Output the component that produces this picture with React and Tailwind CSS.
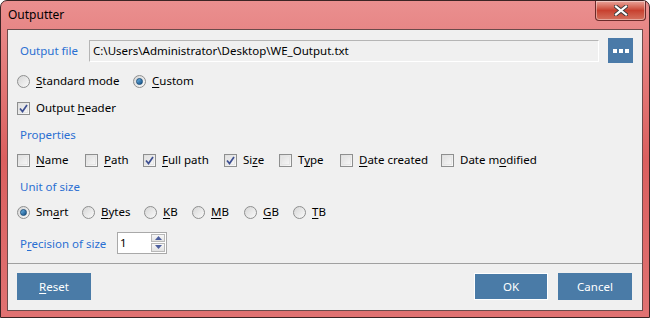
import { useState } from "react";

const font = { fontFamily: '"Noto Sans", "Open Sans", sans-serif' };

function Label({ text, u }) {
    // underline the access key letter
    const i = u ?? -1;
    if (i < 0) return <span>{text}</span>;
    return (
        <span>
            {text.slice(0, i)}
            <span className="underline underline-offset-2">{text[i]}</span>
            {text.slice(i + 1)}
        </span>
    );
}

function Check({ checked }) {
    return (
        <span className="relative flex h-[13px] w-[13px] shrink-0 items-center justify-center border border-[#8e8f8f] bg-gradient-to-br from-[#dcdcdc] to-[#fbfbfb]">
            <span className="absolute inset-[1px] border border-[#e6e6e6]" />
            {checked && (
                <svg width="9" height="9" viewBox="0 0 9 9" className="relative">
                    <path d="M1 4.5 L3.5 7.5 L8 1" fill="none" stroke="#3d4f91" strokeWidth="1.7" />
                </svg>
            )}
        </span>
    );
}

function Radio({ checked }) {
    return (
        <span className="flex h-[13px] w-[13px] shrink-0 items-center justify-center rounded-full border border-[#8e8f8f] bg-gradient-to-br from-[#d6d6d6] to-[#fafafa]">
            {checked && (
                <span className="h-[7px] w-[7px] rounded-full border border-[#1c4e7a] bg-gradient-to-br from-[#6fb7e8] to-[#0f4f86]" />
            )}
        </span>
    );
}

function Option({ type, label, u, checked, w }) {
    return (
        <div className={`flex items-center gap-[6px] ${w}`}>
            {type === "check" ? <Check checked={checked} /> : <Radio checked={checked} />}
            <Label text={label} u={u} />
        </div>
    );
}

const properties = [
    { label: "Name", u: 0, checked: false, w: "w-[68px]" },
    { label: "Path", u: 0, checked: false, w: "w-[58px]" },
    { label: "Full path", u: 0, checked: true, w: "w-[81px]" },
    { label: "Size", u: 2, checked: true, w: "w-[55px]" },
    { label: "Type", u: 1, checked: false, w: "w-[61px]" },
    { label: "Date created", u: 0, checked: false, w: "w-[101px]" },
    { label: "Date modified", u: 6, checked: false, w: "w-auto" },
];

const units = [
    { label: "Smart", u: 2, w: "w-[65px]" },
    { label: "Bytes", u: 0, w: "w-[62px]" },
    { label: "KB", u: 0, w: "w-[48px]" },
    { label: "MB", u: 0, w: "w-[52px]" },
    { label: "GB", u: 0, w: "w-[49px]" },
    { label: "TB", u: 0, w: "w-auto" },
];

export default function App() {
    const [unit] = useState("Smart");

    return (
        <div className="h-[318px] w-[650px] bg-white" style={font}>
            <div className="flex h-full w-full flex-col rounded-t-[7px] border border-[#3b2424] bg-gradient-to-b from-[#ea8f8f] via-[#da5f5f] to-[#e07272] px-[6px] pb-[6px]">
                {/* Title bar */}
                <div className="flex h-[28px] shrink-0 items-start justify-between">
                    <span className="pl-[1px] pt-[5px] text-[12px] text-black">Outputter</span>
                    <div className="-mr-[3px] flex h-[20px] w-[51px] items-center justify-center rounded-b-[4px] border border-t-0 border-[#6b2a2a] bg-gradient-to-b from-[#e9a49b] via-[#c8402f] to-[#d4705e] shadow-[inset_0_0_0_1px_rgba(255,255,255,0.4)]">
                        <svg width="14" height="11" viewBox="0 0 14 11">
                            <path d="M2 1.5 L12 9.5 M12 1.5 L2 9.5" stroke="#3b3b3b" strokeWidth="4" strokeLinecap="square" />
                            <path d="M2 1.5 L12 9.5 M12 1.5 L2 9.5" stroke="#ffffff" strokeWidth="2.2" strokeLinecap="square" />
                        </svg>
                    </div>
                </div>

                {/* Client area */}
                <div className="flex flex-1 flex-col border border-[#6b4b4b] bg-[#f0f0f0] text-[11.5px] text-black">
                    {/* Output file */}
                    <div className="mt-[8px] flex h-[25px] items-center pl-[12px] pr-[9px]">
                        <span className="w-[69px] shrink-0 text-[#2a6fd2]">Output file</span>
                        <div className="mr-[9px] flex h-[22px] flex-1 items-center border border-[#b5b5b5] border-b-white border-r-white bg-[#f0f0f0] pl-[3px]">
                            C:\Users\Administrator\Desktop\WE_Output.txt
                        </div>
                        <button className="flex h-[25px] w-[25px] items-center justify-center gap-[2px] bg-[#4a7aa8]">
                            <span className="h-[4px] w-[4px] bg-white" />
                            <span className="h-[4px] w-[4px] bg-white" />
                            <span className="h-[4px] w-[4px] bg-white" />
                        </button>
                    </div>

                    {/* Mode */}
                    <div className="mt-[10px] flex h-[16px] items-center pl-[9px]">
                        <Option type="radio" label="Standard mode" u={0} w="w-[116px]" />
                        <Option type="radio" label="Custom" u={0} checked w="w-auto" />
                    </div>

                    <div className="mt-[11px] flex h-[16px] items-center pl-[9px]">
                        <Option type="check" label="Output header" u={7} checked w="w-auto" />
                    </div>

                    {/* Properties */}
                    <div className="mt-[11px] h-[16px] pl-[12px] leading-[16px] text-[#2a6fd2]">Properties</div>
                    <div className="mt-[9px] flex h-[16px] items-center pl-[9px]">
                        {properties.map((p) => (
                            <Option key={p.label} type="check" {...p} />
                        ))}
                    </div>

                    {/* Unit of size */}
                    <div className="mt-[11px] h-[16px] pl-[12px] leading-[16px] text-[#2a6fd2]">Unit of size</div>
                    <div className="mt-[9px] flex h-[16px] items-center pl-[9px]">
                        {units.map((x) => (
                            <Option key={x.label} type="radio" {...x} checked={unit === x.label} />
                        ))}
                    </div>

                    {/* Precision */}
                    <div className="mt-[12px] flex h-[21px] items-center pl-[12px]">
                        <span className="w-[97px] shrink-0 pt-[2px] text-[#2a6fd2]">
                            <Label text="Precision of size" u={1} />
                        </span>
                        <div className="flex h-[22px] w-[50px] items-center border border-[#a9a9a9] bg-white">
                            <span className="flex-1 pl-[2px] leading-none">1</span>
                            <div className="mr-[1px] flex h-[18px] w-[14px] flex-col gap-[1px]">
                                <div className="flex flex-1 items-center justify-center border border-[#b8b8b8] bg-gradient-to-b from-[#f8f8f8] to-[#e2e2e2]">
                                    <svg width="7" height="4" viewBox="0 0 7 4"><path d="M0 4 L3.5 0 L7 4 Z" fill="#4d5f9e" /></svg>
                                </div>
                                <div className="flex flex-1 items-center justify-center border border-[#b8b8b8] bg-gradient-to-b from-[#f8f8f8] to-[#e2e2e2]">
                                    <svg width="7" height="4" viewBox="0 0 7 4"><path d="M0 0 L7 0 L3.5 4 Z" fill="#4d5f9e" /></svg>
                                </div>
                            </div>
                        </div>
                    </div>

                    {/* Separator */}
                    <div className="mt-[10px] h-px bg-[#a0a0a0]" />

                    {/* Footer buttons */}
                    <div className="mt-[9px] flex items-center pl-[9px] pr-[10px]">
                        <button className="h-[27px] w-[74px] bg-[#4a7ba7] text-white">
                            <Label text="Reset" u={0} />
                        </button>
                        <div className="flex-1" />
                        <button className="h-[27px] w-[74px] border border-white bg-[#4a7ba7] text-white">OK</button>
                        <button className="ml-[10px] h-[27px] w-[74px] bg-[#4a7ba7] text-white">Cancel</button>
                    </div>
                </div>
            </div>
        </div>
    );
}
